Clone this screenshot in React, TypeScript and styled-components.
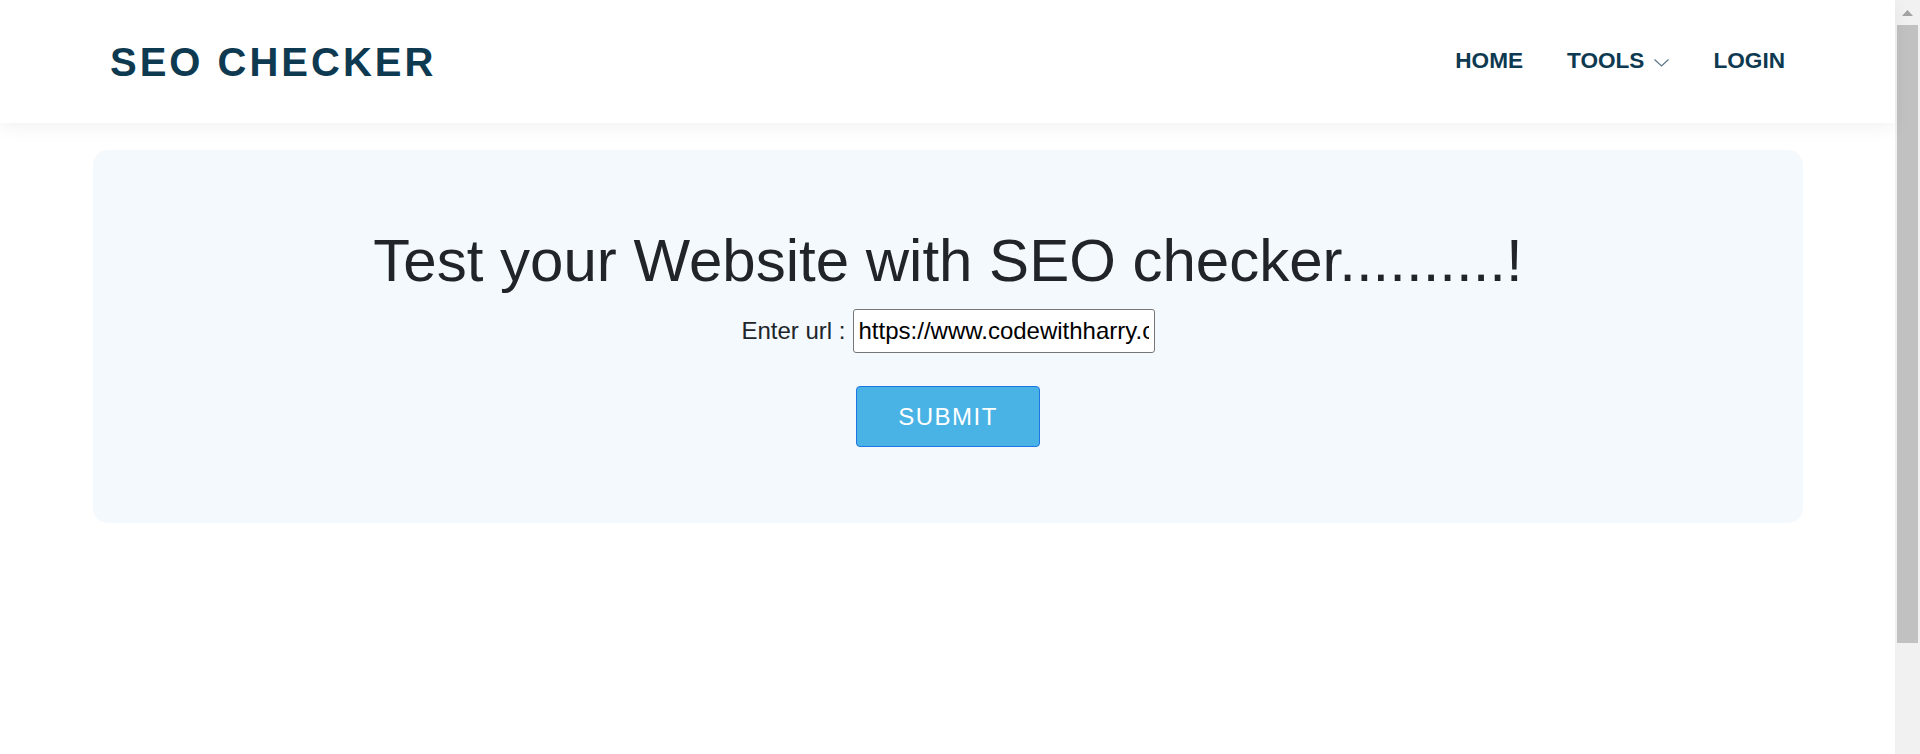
import React from "react";
import styled, { createGlobalStyle } from "styled-components";

const GlobalStyle = createGlobalStyle`
  html, body {
    margin: 0;
    padding: 0;
    height: 100%;
    overflow: hidden;
    background: #ffffff;
    font-family: "Liberation Sans", Arial, sans-serif;
  }
  * { box-sizing: border-box; }
`;

const Frame = styled.div`
  display: flex;
  height: 100vh;
  width: 100%;
`;

const Page = styled.div`
  flex: 1;
  min-width: 0;
  display: flex;
  flex-direction: column;
  background: #ffffff;
`;

const Header = styled.header`
  height: 123px;
  flex-shrink: 0;
  display: flex;
  align-items: center;
  justify-content: space-between;
  padding: 0 110px;
  background: #ffffff;
  box-shadow: 0 4px 18px rgba(0, 0, 0, 0.06);
  position: relative;
  z-index: 1;
`;

const Logo = styled.a`
  font-size: 40px;
  font-weight: 700;
  letter-spacing: 3px;
  color: #0e3a51;
  text-decoration: none;
  line-height: 1;
`;

const Nav = styled.nav`
  display: flex;
  align-items: center;
  gap: 44px;
`;

const NavItem = styled.a`
  display: flex;
  align-items: center;
  gap: 10px;
  font-size: 22.6px;
  font-weight: 700;
  color: #0e3a51;
  text-decoration: none;
  line-height: 1;
`;

const Chevron = styled.svg`
  width: 15px;
  height: 8px;
  margin-top: 2px;
`;

const Main = styled.main`
  padding: 27px 92px 0 93px;
`;

const Card = styled.section`
  background: #f3f9fd;
  border-radius: 15px;
  padding: 75px 0 76px;
  display: flex;
  flex-direction: column;
  align-items: center;
`;

const Title = styled.h1`
  margin: 0;
  font-size: 60px;
  font-weight: 400;
  line-height: 72px;
  color: #212529;
`;

const UrlRow = styled.form`
  margin-top: 12px;
  display: flex;
  align-items: baseline;
  gap: 7px;
`;

const Label = styled.label`
  font-size: 24px;
  color: #212529;
`;

const UrlInput = styled.input`
  width: 302px;
  height: 44px;
  padding: 7px 5px;
  border: 1px solid #767676;
  border-radius: 3px;
  background: #ffffff;
  font-family: "Liberation Sans", Arial, sans-serif;
  font-size: 24px;
  color: #000000;
  outline: none;
`;

const SubmitButton = styled.button`
  margin-top: 33px;
  width: 184px;
  height: 61px;
  background: #4ab3e5;
  border: 1px solid #1d76e2;
  border-radius: 4px;
  color: #ffffff;
  font-family: "Liberation Sans", Arial, sans-serif;
  font-size: 24px;
  letter-spacing: 1.5px;
  cursor: pointer;
`;

const ScrollTrack = styled.div`
  width: 25px;
  flex-shrink: 0;
  background: #f1f1f1;
  display: flex;
  flex-direction: column;
  align-items: center;
`;

const ScrollArrow = styled.div`
  height: 25px;
  width: 100%;
  display: flex;
  justify-content: center;
  padding-top: 10px;
`;

const ScrollThumb = styled.div`
  width: 21px;
  height: 618px;
  background: #c1c1c1;
`;

export default function App() {
  return (
    <>
      <GlobalStyle />
      <Frame>
        <Page>
          <Header>
            <Logo href="#">SEO CHECKER</Logo>
            <Nav>
              <NavItem href="#">HOME</NavItem>
              <NavItem href="#">
                TOOLS
                <Chevron viewBox="0 0 15 8" fill="none">
                  <polyline
                    points="0.5,0.5 7.5,7 14.5,0.5"
                    stroke="#5b7686"
                    strokeWidth="1.2"
                  />
                </Chevron>
              </NavItem>
              <NavItem href="#">LOGIN</NavItem>
            </Nav>
          </Header>
          <Main>
            <Card>
              <Title>Test your Website with SEO checker..........!</Title>
              <UrlRow onSubmit={(e) => e.preventDefault()}>
                <Label htmlFor="url">Enter url :</Label>
                <UrlInput
                  id="url"
                  type="text"
                  defaultValue="https://www.codewithharry.com/"
                />
              </UrlRow>
              <SubmitButton type="button">SUBMIT</SubmitButton>
            </Card>
          </Main>
        </Page>
        <ScrollTrack>
          <ScrollArrow>
            <svg width="11" height="6" viewBox="0 0 11 6">
              <polygon points="5.5,0 11,6 0,6" fill="#a3a3a3" />
            </svg>
          </ScrollArrow>
          <ScrollThumb />
        </ScrollTrack>
      </Frame>
    </>
  );
}
